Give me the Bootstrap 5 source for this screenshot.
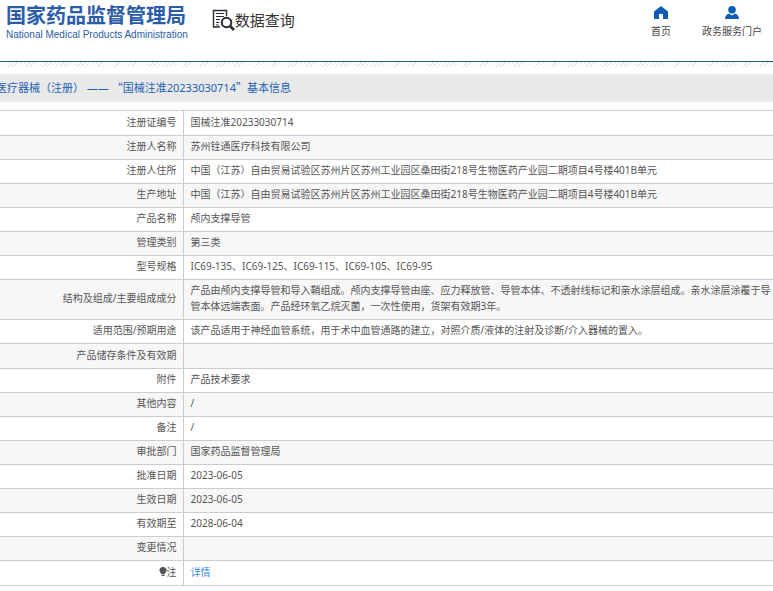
<!DOCTYPE html>
<html lang="zh-CN">
<head>
<meta charset="utf-8">
<meta name="viewport" content="width=device-width, initial-scale=1">
<title>国家药品监督管理局 数据查询</title>
<link href="https://cdn.jsdelivr.net/npm/bootstrap@5.3.0/dist/css/bootstrap.min.css" rel="stylesheet">
<style>
body{font-family:"Noto Sans","Noto Sans CJK SC",sans-serif;font-size:10px;line-height:16px;color:#555;background:#fff}
a{text-decoration:none}
.site-header{height:61px;padding-left:6px;padding-right:11px}
.brand-name{font-family:"Noto Sans CJK SC",sans-serif;font-size:20px;line-height:26px;font-weight:700;color:#2a5caa;margin-top:2px;white-space:nowrap}
.brand-en{font-family:"Liberation Sans",sans-serif;font-size:10px;line-height:14px;color:#2a5caa;white-space:nowrap}
.query-title{font-family:"Noto Sans CJK SC",sans-serif;font-size:15px;font-weight:400;line-height:22px;color:#333;margin:9px 0 0 24px;white-space:nowrap}
.quick-links{gap:31px}
.quick-link{color:#444;margin-top:6px}
.quick-link svg{margin-bottom:4px}
.hatch{height:6px;border-top:1px solid #1c5a86;background:repeating-linear-gradient(135deg,#e8e8e8 0 1px,#fff 1px 3px)}
.page-title{font-size:11px;font-weight:400;line-height:28px;background:#e9e9e9;color:#1f5fb4;margin:7px 0 8px;white-space:nowrap}
.page-title span{display:block;margin-left:-4px}
.page-title q{quotes:none}
.page-title q::before,.page-title q::after{font-family:"Noto Sans CJK SC",sans-serif;line-height:16px}
.page-title q::before{content:"“"}
.page-title q::after{content:"”"}
.detail{border-collapse:collapse}
.detail th,.detail td{border:1px solid #ccc;padding:2px 0 5px 7px;height:24px;vertical-align:middle}
.detail th{width:183px;font-weight:400;text-align:right;padding-right:6px;border-left:0}
.detail td{border-right:0}
.detail tr:nth-child(even){background:#f7f7f7}
.detail .roomy>*{height:25px}
.detail a{color:#3a8ee6}
</style>
<script src="https://cdn.jsdelivr.net/npm/bootstrap@5.3.0/dist/js/bootstrap.bundle.min.js"></script>
</head>
<body class="overflow-hidden">
<header class="site-header d-flex align-items-start">
  <div>
    <div class="brand-name">国家药品监督管理局</div>
    <div class="brand-en">National Medical Products Administration</div>
  </div>
  <h1 class="query-title d-flex align-items-center">
    <svg width="23" height="22" viewBox="0 0 23 22" fill="none" stroke="#2b2b35" aria-hidden="true"><path d="M8 18H1.500V1.500H14.500V7" stroke-width="1.400"/><path d="M4 4.500H12M4 7.500H12M4 10.500H8M4 13.500H7M4 16H7" stroke-width="1.200"/><circle cx="14.500" cy="13.500" r="4.800" stroke-width="2"/><path d="M18 17L22 21" stroke-width="2.600"/></svg>
    <span>数据查询</span>
  </h1>
  <nav class="quick-links ms-auto d-flex align-items-start">
    <a class="quick-link d-flex flex-column align-items-center" href="#"><svg width="14" height="13" viewBox="0 0 14 13" fill="#0d5cb6" aria-hidden="true"><path d="M7 0L14 5.500V13H9V8H5V13H0V5.500Z"/></svg>首页</a>
    <a class="quick-link d-flex flex-column align-items-center" href="#"><svg width="14" height="13" viewBox="0 0 14 13" fill="#0d5cb6" aria-hidden="true"><circle cx="7" cy="3.800" r="3.800"/><path d="M0 13C0 10 2 8 4 7.500L7 9.500L10 7.500C12 8 14 10 14 13Z"/></svg>政务服务门户</a>
  </nav>
</header>
<div class="hatch"></div>
<main>
  <h2 class="page-title"><span>医疗器械（注册） —— <q>国械注准20233030714</q>基本信息</span></h2>
  <table class="detail w-100">
    <tbody>
    <tr class="roomy"><th scope="row">注册证编号</th><td>国械注准20233030714</td></tr>
    <tr><th scope="row">注册人名称</th><td>苏州铨通医疗科技有限公司</td></tr>
    <tr><th scope="row">注册人住所</th><td>中国（江苏）自由贸易试验区苏州片区苏州工业园区桑田街218号生物医药产业园二期项目4号楼401B单元</td></tr>
    <tr><th scope="row">生产地址</th><td>中国（江苏）自由贸易试验区苏州片区苏州工业园区桑田街218号生物医药产业园二期项目4号楼401B单元</td></tr>
    <tr><th scope="row">产品名称</th><td>颅内支撑导管</td></tr>
    <tr><th scope="row">管理类别</th><td>第三类</td></tr>
    <tr><th scope="row">型号规格</th><td>IC69-135、IC69-125、IC69-115、IC69-105、IC69-95</td></tr>
    <tr><th scope="row">结构及组成/主要组成成分</th><td>产品由颅内支撑导管和导入鞘组成。颅内支撑导管由座、应力释放管、导管本体、不透射线标记和亲水涂层组成。亲水涂层涂覆于导管本体远端表面。产品经环氧乙烷灭菌，一次性使用，货架有效期3年。</td></tr>
    <tr><th scope="row">适用范围/预期用途</th><td>该产品适用于神经血管系统，用于术中血管通路的建立，对照介质/液体的注射及诊断/介入器械的置入。</td></tr>
    <tr class="roomy"><th scope="row">产品储存条件及有效期</th><td></td></tr>
    <tr><th scope="row">附件</th><td>产品技术要求</td></tr>
    <tr><th scope="row">其他内容</th><td>/</td></tr>
    <tr><th scope="row">备注</th><td>/</td></tr>
    <tr><th scope="row">审批部门</th><td>国家药品监督管理局</td></tr>
    <tr><th scope="row">批准日期</th><td>2023-06-05</td></tr>
    <tr><th scope="row">生效日期</th><td>2023-06-05</td></tr>
    <tr><th scope="row">有效期至</th><td>2028-06-04</td></tr>
    <tr><th scope="row">变更情况</th><td></td></tr>
    <tr class="roomy"><th scope="row"><svg width="8" height="9" viewBox="0 0 8 10" fill="#555" class="align-baseline" aria-hidden="true"><path d="M4 0C6.500 0 8 1.700 8 3.700C8 5.500 6.500 6.200 6 8H2C1.500 6.200 0 5.500 0 3.700C0 1.700 1.500 0 4 0ZM2.500 8.500H5.500V10H2.500Z"/></svg>注</th><td><a href="#">详情</a></td></tr>
    </tbody>
  </table>
</main>
</body>
</html>
